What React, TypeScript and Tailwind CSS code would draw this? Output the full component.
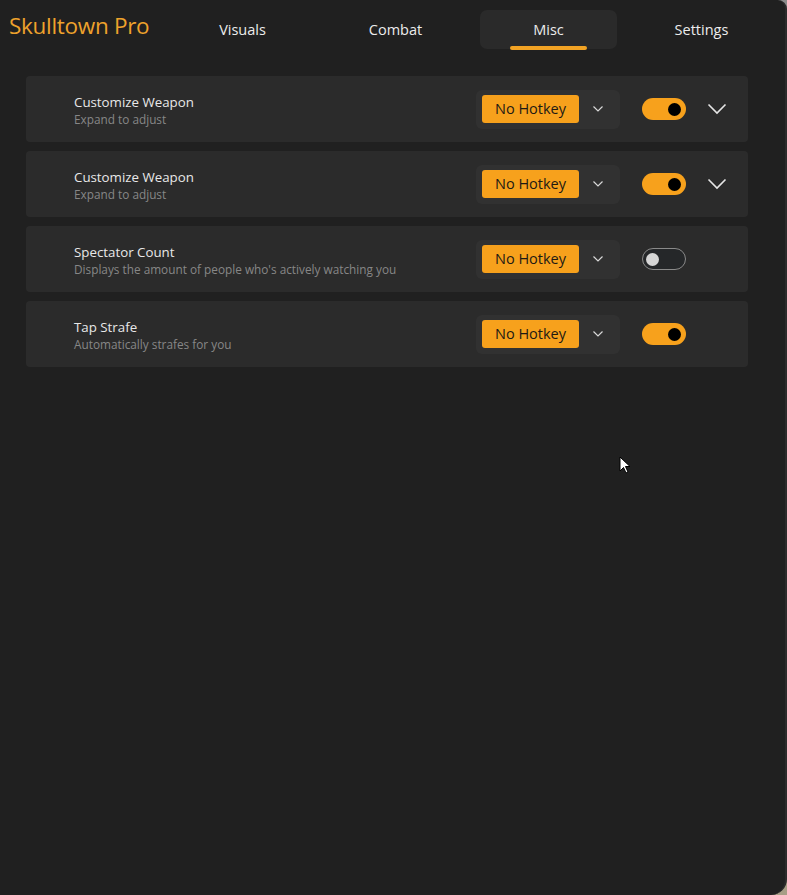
import React from "react";

const tabs = ["Visuals", "Combat", "Misc", "Settings"];

const rows = [
  { title: "Customize Weapon", sub: "Expand to adjust", on: true, expand: true },
  { title: "Customize Weapon", sub: "Expand to adjust", on: true, expand: true },
  { title: "Spectator Count", sub: "Displays the amount of people who's actively watching you", on: false, expand: false },
  { title: "Tap Strafe", sub: "Automatically strafes for you", on: true, expand: false },
];

const SmallChevron = () => (
  <svg width="12" height="8" viewBox="0 0 12 8" fill="none">
    <path d="M1.5 1.5 L6 6 L10.5 1.5" stroke="#d8d8d8" strokeWidth="1.2" />
  </svg>
);

const BigChevron = () => (
  <svg width="20" height="12" viewBox="0 0 20 12" fill="none">
    <path d="M1.5 1.5 L10 10 L18.5 1.5" stroke="#e6e6e6" strokeWidth="1.6" />
  </svg>
);

const Toggle = ({ on }: { on: boolean }) =>
  on ? (
    <div className="w-[44px] h-[22px] rounded-full bg-[#f7a11c] flex items-center justify-end pr-[5px]">
      <div className="w-[13px] h-[13px] rounded-full bg-black" />
    </div>
  ) : (
    <div className="w-[44px] h-[22px] rounded-full border border-[#8a8a8a] bg-[#252729] flex items-center pl-[3px]">
      <div className="w-[13px] h-[13px] rounded-full bg-[#d6d6d6]" />
    </div>
  );

export default function App() {
  return (
    <div className="w-[787px] h-[895px] bg-[linear-gradient(180deg,#8c8c8c_0%,#a89e86_100%)]">
      <div
        className="w-[787px] h-[895px] bg-[#202020] rounded-tr-[9px] rounded-br-[16px] border-r-2 border-[#2c2c2c] relative overflow-hidden"
        style={{ fontFamily: '"Open Sans", "Noto Sans", sans-serif' }}
      >
        <div className="flex items-center h-[59px]">
          <div className="w-[166px] pl-[9px] text-[22.5px] text-[#eea22c] leading-none tracking-[-0.3px] pb-[7px]">
            Skulltown Pro
          </div>
          <div className="flex">
            {tabs.map((t) => (
              <div key={t} className="w-[153px] h-[59px] flex items-center justify-center">
                {t === "Misc" ? (
                  <div className="relative w-[137px] h-[39px] bg-[#2a2a2a] rounded-[7px] flex items-center justify-center text-[14.5px] text-[#ececec]">
                    Misc
                    <div className="absolute left-[30px] bottom-[-1px] w-[77px] h-[4px] rounded-[2px] bg-[#f2a324]" />
                  </div>
                ) : (
                  <span className="text-[14.5px] text-[#ececec]">{t}</span>
                )}
              </div>
            ))}
          </div>
        </div>

        <div className="flex flex-col gap-[9px] pl-[26px] pt-[17px] w-[748px]">
          {rows.map((r, i) => (
            <div key={i} className="h-[66px] bg-[#2b2b2b] rounded-[4px] flex items-center">
              <div className="pl-[48px] flex-1 flex flex-col pt-[3px]">
                <span className="text-[13.3px] text-[#e8e8e8] leading-[17px]">{r.title}</span>
                <span className="text-[11.8px] text-[#878787] leading-[16px]">{r.sub}</span>
              </div>
              <div className="w-[144px] h-[39px] bg-[#313131] rounded-[6px] flex items-center pl-[6px]">
                <div className="w-[97px] h-[28px] bg-[#f7a11c] rounded-[3px] flex items-center justify-center text-[14.5px] text-[#1e1a14]">
                  No Hotkey
                </div>
                <div className="flex-1 flex justify-center pr-[3px]">
                  <SmallChevron />
                </div>
              </div>
              <div className="ml-[22px]">
                <Toggle on={r.on} />
              </div>
              <div className="w-[62px] flex justify-center">{r.expand && <BigChevron />}</div>
            </div>
          ))}
        </div>

        <svg className="absolute left-[619px] top-[456px]" width="12" height="18" viewBox="0 0 12 18">
          <path d="M1 1 L1 15 L4.5 11.5 L7 17 L9 16 L6.5 10.5 L11 10.5 Z" fill="#fff" stroke="#000" strokeWidth="1" />
        </svg>
      </div>
    </div>
  );
}
